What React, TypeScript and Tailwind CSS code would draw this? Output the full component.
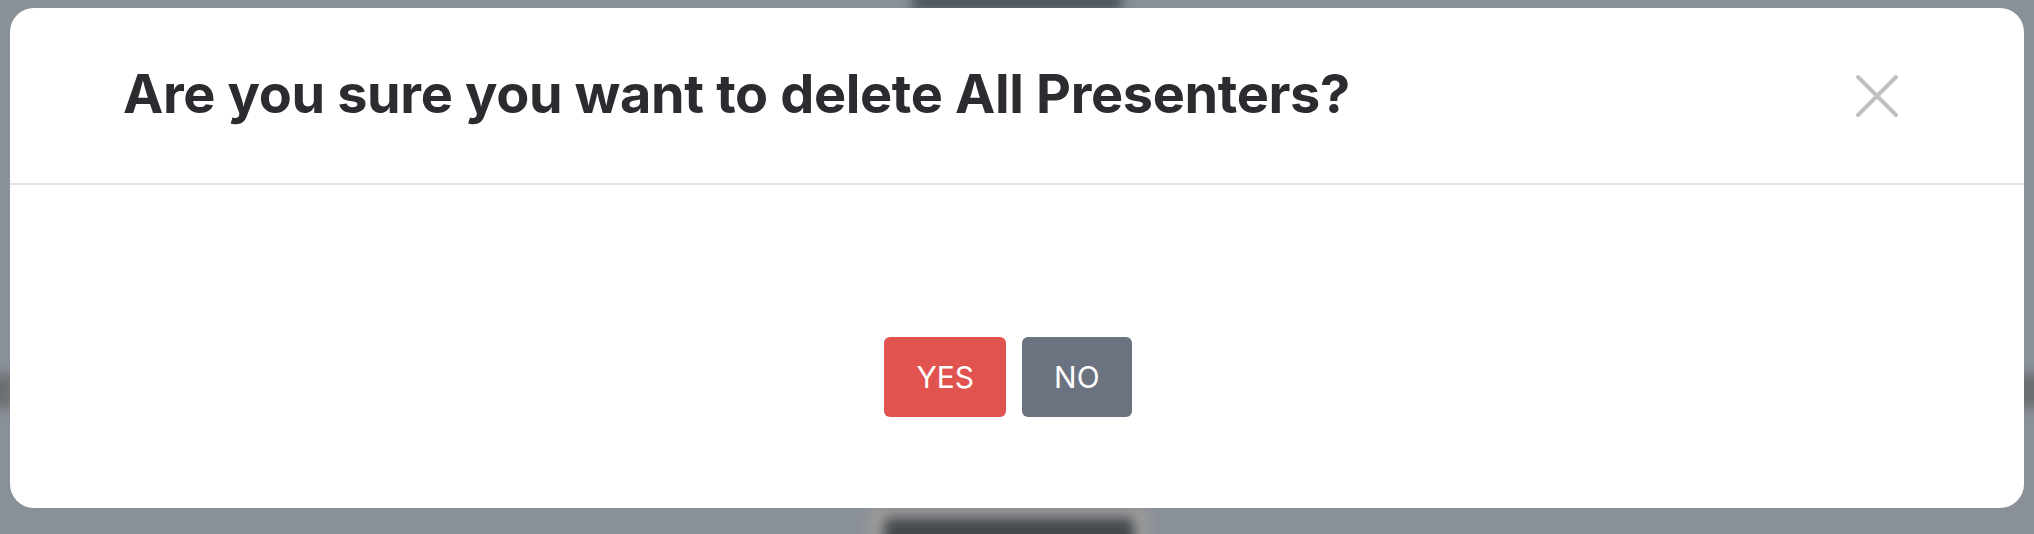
import React from 'react';

const CloseIcon = () => (
  <svg width="44" height="44" viewBox="0 0 44 44" fill="none" stroke="#c0c0c0" strokeWidth="4" strokeLinecap="round">
    <path d="M3 3L41 41M41 3L3 41" />
  </svg>
);

// Blurred page sitting behind the dimmed overlay
const BlurredBackdrop = () => (
  <div className="pointer-events-none absolute inset-0 flex flex-col items-center justify-between blur-[6px]">
    <div className="-mt-[10px] h-[22px] w-[210px] rounded bg-[#4f555c]" />
    <div className="flex w-full justify-between pt-[262px]">
      <div className="-ml-[10px] h-[34px] w-[24px] bg-[#6a6e72]" />
      <div className="-mr-[10px] h-[34px] w-[28px] bg-[#6a6e72]" />
    </div>
    <div className="-mb-[22px] mr-[16px] flex h-[48px] w-[280px] items-end justify-center bg-[#9a9a9a]">
      <div className="h-[38px] w-[250px] rounded-lg bg-[#45494d]" />
    </div>
  </div>
);

export default function App() {
  return (
    <div className="relative h-[534px] w-full overflow-hidden bg-[#8a9097] font-['Inter',sans-serif]">
      <BlurredBackdrop />

      <div className="relative px-[10px] pt-2">
        <div className="flex h-[500px] flex-col rounded-3xl bg-white">
          <div className="flex h-[177px] items-center justify-between border-b-2 border-[#e4e4ea] pl-[113px] pr-[125px]">
            <h2 className="pb-1 text-[54px] font-bold leading-none tracking-[-0.35px] text-[#2b2b30]">
              Are you sure you want to delete All Presenters?
            </h2>
            <button type="button" className="flex items-center justify-center" aria-label="Close">
              <CloseIcon />
            </button>
          </div>
          <div className="flex flex-1 justify-center gap-4 pr-[18px] pt-[152px]">
            <button type="button" className="h-20 rounded-md bg-[#e0534f] px-8 text-[30px] font-normal text-white">
              YES
            </button>
            <button type="button" className="h-20 rounded-md bg-[#6b7280] px-8 text-[30px] font-normal text-white">
              NO
            </button>
          </div>
        </div>
      </div>
    </div>
  );
}
